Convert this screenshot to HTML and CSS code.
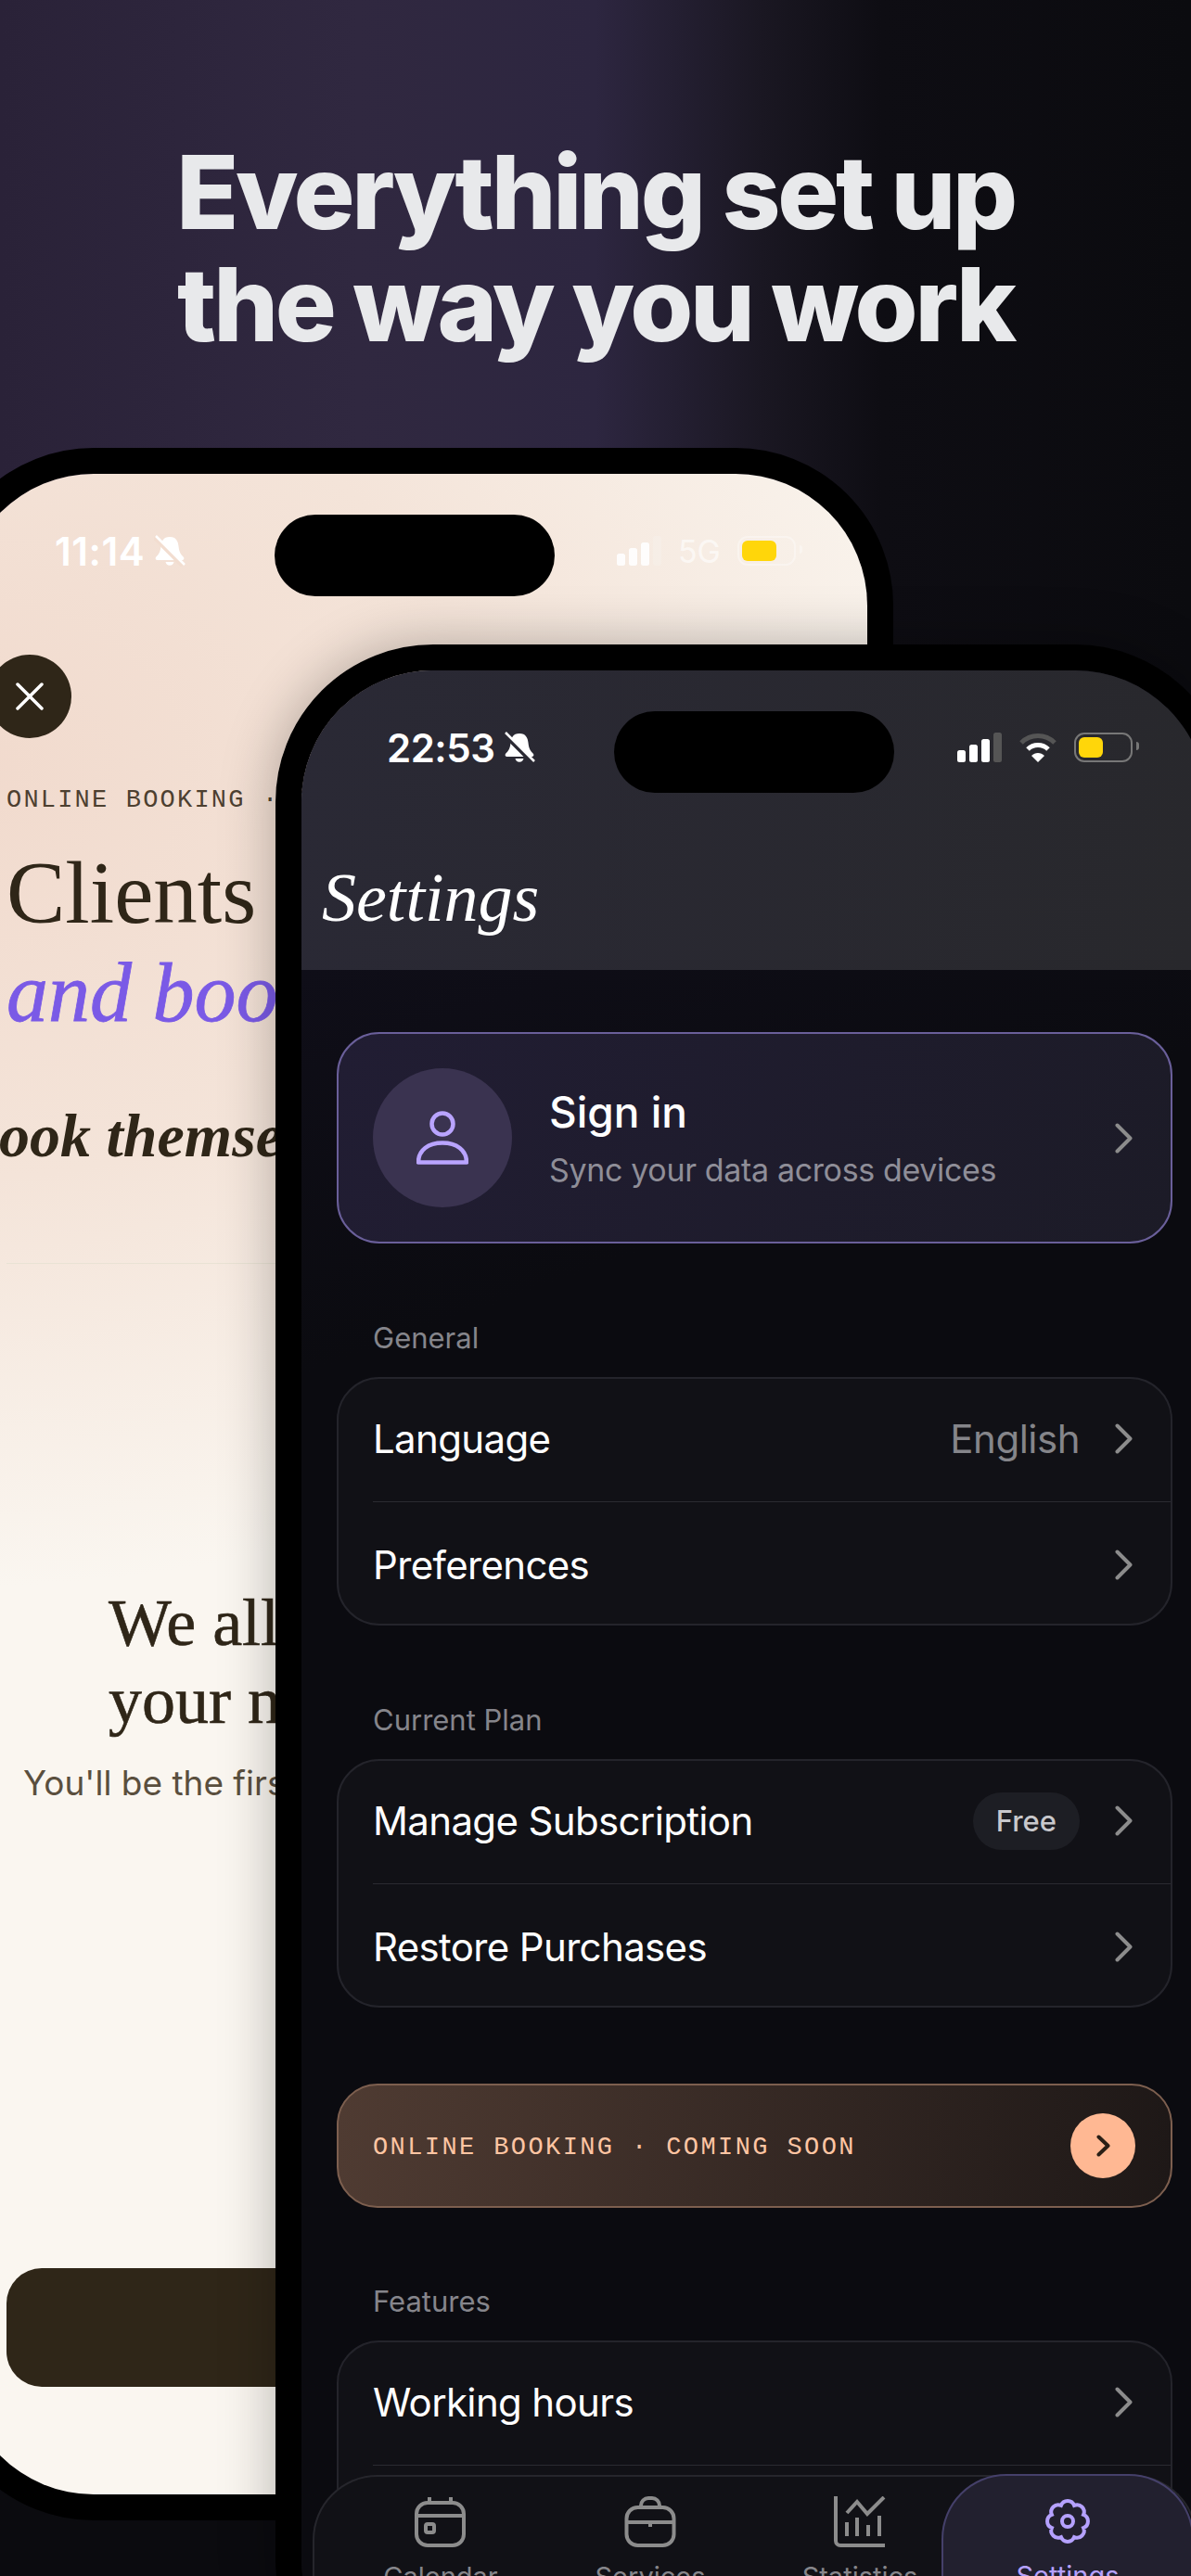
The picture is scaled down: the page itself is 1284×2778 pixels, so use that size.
FILE: index.html
```html
<!DOCTYPE html>
<html lang="en">
<head>
    <meta charset="UTF-8">
    <meta name="viewport" content="width=device-width, initial-scale=1.0">
    <title>Everything set up the way you work</title>
    <link rel="stylesheet" href="styles.css">
</head>
<body>
    <h1 class="headline">Everything set up<br>the way you work</h1>

    <!-- Booking phone, behind -->
    <div class="phone phone-back">
        <div class="screen screen-light">
            <div class="notch"></div>
            <div class="status status-light">
                <div class="status-time">
                    <span>11:14</span>
                    <svg class="bell" viewBox="0 0 34 34"><path class="bell-body" d="M17 2C10 2 8 7 7.500 12C7 18 5 21 2 24C1 25.500 2 27 3.500 27H30.500C32 27 33 25.500 32 24C29 21 27 18 26.500 12C26 7 24 2 17 2ZM12.500 29a4.600 4.600 0 0 0 9 0Z"/><path class="bell-gap" d="M0 2L31 33"/><path class="bell-slash" d="M2 1L33 32"/></svg>
                </div>
                <div class="status-icons">
                    <svg class="signal" viewBox="0 0 48 32"><rect x="0" y="19" width="9" height="13" rx="2.500"/><rect x="13" y="13" width="9" height="19" rx="2.500"/><rect x="26" y="7" width="9" height="25" rx="2.500"/><rect class="dim" x="39" y="0" width="9" height="32" rx="2.500"/></svg>
                    <span class="net">5G</span>
                    <div class="battery"><div class="battery-fill"></div></div>
                </div>
            </div>

            <div class="close-btn">
                <svg viewBox="0 0 32 32"><path d="M3 3L29 29M29 3L3 29"/></svg>
            </div>
            <p class="overline">ONLINE BOOKING · COMING SOON</p>
            <h2 class="hero-title">Clients choose</h2>
            <h2 class="hero-accent">and book online</h2>
            <p class="hero-sub">book themselves</p>
            <hr class="hero-rule">
            <h3 class="notice-title">We all keep<br>your number</h3>
            <p class="notice-text">You'll be the first to know</p>
            <div class="notify-btn"></div>
        </div>
    </div>

    <!-- Settings phone, in front -->
    <div class="phone phone-front">
        <div class="screen screen-dark">
            <div class="notch"></div>
            <header class="settings-head">
                <div class="status">
                    <div class="status-time">
                        <span>22:53</span>
                        <svg class="bell" viewBox="0 0 34 34"><path class="bell-body" d="M17 2C10 2 8 7 7.500 12C7 18 5 21 2 24C1 25.500 2 27 3.500 27H30.500C32 27 33 25.500 32 24C29 21 27 18 26.500 12C26 7 24 2 17 2ZM12.500 29a4.600 4.600 0 0 0 9 0Z"/><path class="bell-gap" d="M0 2L31 33"/><path class="bell-slash" d="M2 1L33 32"/></svg>
                    </div>
                    <div class="status-icons">
                        <svg class="signal" viewBox="0 0 48 32"><rect x="0" y="19" width="9" height="13" rx="2.500"/><rect x="13" y="13" width="9" height="19" rx="2.500"/><rect x="26" y="7" width="9" height="25" rx="2.500"/><rect class="dim" x="39" y="0" width="9" height="32" rx="2.500"/></svg>
                        <svg class="wifi" viewBox="0 0 42 32"><path class="wifi-outer" d="M3 11C13 1 29 1 39 11"/><path class="wifi-mid" d="M10 18C16 12 26 12 32 18"/><path class="wifi-dot" d="M14 25C18 21 24 21 28 25L21 32Z"/></svg>
                        <div class="battery"><div class="battery-fill"></div></div>
                    </div>
                </div>
                <h2 class="settings-title">Settings</h2>
            </header>

            <main class="settings-body">
                <div class="signin-card">
                    <div class="avatar">
                        <svg viewBox="0 0 56 58"><circle cx="28" cy="14" r="11.500"/><path d="M2 55.500C2 42 13 34.500 28 34.500S54 42 54 55.500Z"/></svg>
                    </div>
                    <div class="signin-text">
                        <div class="signin-title">Sign in</div>
                        <div class="signin-sub">Sync your data across devices</div>
                    </div>
                    <svg class="chevron" viewBox="0 0 19 33"><path d="M2.500 2.500L16.500 16.500L2.500 30.500"/></svg>
                </div>

                <div class="group-label">General</div>
                <div class="group">
                    <div class="row">
                        <span class="row-name">Language</span>
                        <span class="row-value">English</span>
                        <svg class="chevron" viewBox="0 0 19 33"><path d="M2.500 2.500L16.500 16.500L2.500 30.500"/></svg>
                    </div>
                    <div class="row">
                        <span class="row-name">Preferences</span>
                        <svg class="chevron" viewBox="0 0 19 33"><path d="M2.500 2.500L16.500 16.500L2.500 30.500"/></svg>
                    </div>
                </div>

                <div class="group-label">Current Plan</div>
                <div class="group">
                    <div class="row">
                        <span class="row-name">Manage Subscription</span>
                        <span class="badge">Free</span>
                        <svg class="chevron" viewBox="0 0 19 33"><path d="M2.500 2.500L16.500 16.500L2.500 30.500"/></svg>
                    </div>
                    <div class="row">
                        <span class="row-name">Restore Purchases</span>
                        <svg class="chevron" viewBox="0 0 19 33"><path d="M2.500 2.500L16.500 16.500L2.500 30.500"/></svg>
                    </div>
                </div>

                <div class="promo">
                    <span class="promo-text">ONLINE BOOKING · COMING SOON</span>
                    <div class="promo-btn">
                        <svg viewBox="0 0 15 24"><path d="M2.500 2.500L12.500 12L2.500 21.500"/></svg>
                    </div>
                </div>

                <div class="group-label">Features</div>
                <div class="group">
                    <div class="row">
                        <span class="row-name">Working hours</span>
                        <svg class="chevron" viewBox="0 0 19 33"><path d="M2.500 2.500L16.500 16.500L2.500 30.500"/></svg>
                    </div>
                    <div class="row">
                        <span class="row-name">Notifications</span>
                        <svg class="chevron" viewBox="0 0 19 33"><path d="M2.500 2.500L16.500 16.500L2.500 30.500"/></svg>
                    </div>
                </div>
            </main>

            <nav class="tabbar">
                <div class="tab">
                    <svg viewBox="0 0 56 56"><rect x="2" y="7" width="51" height="46" rx="12"/><path d="M2 21H53M16 1V7M39 1V7"/><rect x="12" y="30" width="9" height="9" rx="2"/></svg>
                    <span>Calendar</span>
                </div>
                <div class="tab">
                    <svg viewBox="0 0 56 56"><rect x="2.500" y="12" width="51" height="41" rx="12"/><path d="M18 12V10a8 8 0 0 1 8-8h4a8 8 0 0 1 8 8v2M2.500 28H53.500M28 28V33"/></svg>
                    <span>Services</span>
                </div>
                <div class="tab">
                    <svg viewBox="0 0 56 56"><path d="M2 0V48a5 5 0 0 0 5 5H55M14 28V43M25 23V43M37 31V43M49 21V43M14 18L25 6L36 19L54 1"/></svg>
                    <span>Statistics</span>
                </div>
                <div class="tab tab-active">
                    <svg viewBox="0 0 50 50"><path d="M42.090 17.920A7.600 7.600 0 0 1 42.090 32.080A7.600 7.600 0 0 1 32.080 42.090A7.600 7.600 0 0 1 17.920 42.090A7.600 7.600 0 0 1 7.910 32.080A7.600 7.600 0 0 1 7.910 17.920A7.600 7.600 0 0 1 17.920 7.910A7.600 7.600 0 0 1 32.080 7.910A7.600 7.600 0 0 1 42.090 17.920Z"/><circle cx="25" cy="25" r="6"/></svg>
                    <span>Settings</span>
                </div>
            </nav>
        </div>
    </div>
</body>
</html>
```

FILE: styles.css
```css
html, body {
    margin: 0;
    padding: 0;
}

body {
    position: relative;
    width: 1284px;
    height: 2778px;
    overflow: hidden;
    font-family: Inter, "Liberation Sans", sans-serif;
    background-color: #0b0b0f;
    background-image: linear-gradient(90deg, #2a2238 0, #302840 30%, #2d2640 50%, #1a1722 64%, #0e0d13 74%, #0b0b0f 100%);
    background-size: 100% 800px;
    background-repeat: no-repeat;
}

.headline {
    margin: 0;
    padding-top: 147px;
    font-size: 110px;
    line-height: 121px;
    font-weight: 800;
    letter-spacing: -3.3px;
    text-align: center;
    color: #e8e9eb;
}

/* phones */
.phone {
    position: absolute;
    box-sizing: border-box;
    width: 1032px;
    height: 2235px;
    border: 28px solid #000;
    border-radius: 170px;
}

.phone-back {
    left: -69px;
    top: 483px;
}

.phone-front {
    left: 297px;
    top: 695px;
    box-shadow: 0 0 60px rgba(0, 0, 0, 0.28);
}

.screen {
    position: relative;
    height: 100%;
    border-radius: 142px;
    overflow: hidden;
}

.screen-light {
    background: #faf6f0 radial-gradient(ellipse 1150px 880px at 0 320px, #f1dacd 0, #f4e4d9 50%, #faf6f0 100%) no-repeat;
}

.screen-dark {
    background: linear-gradient(160deg, #12101e 0, #0b0b10 30%);
}

.notch {
    position: absolute;
    left: 337px;
    top: 44px;
    width: 302px;
    height: 88px;
    border-radius: 44px;
    background: #000;
}

/* status bar */
.status {
    display: flex;
    justify-content: space-between;
    align-items: center;
    height: 34px;
    padding: 66px 80px 0 92px;
    color: #fff;
    --gap: #2a2933;
}

.status-light {
    padding: 66px 77px 0 100px;
    --gap: #f2ddd0;
}

.status-time {
    display: flex;
    align-items: center;
    gap: 10px;
    font-size: 42px;
    font-weight: 600;
    letter-spacing: -0.5px;
}

.status-light .status-time {
    letter-spacing: 0.5px;
}

.bell {
    width: 34px;
    height: 34px;
}

.bell-body {
    fill: #fff;
}

.bell-gap {
    stroke: var(--gap);
    stroke-width: 5;
}

.bell-slash {
    stroke: #fff;
    stroke-width: 2.500;
}

.status-icons {
    display: flex;
    align-items: center;
    gap: 18px;
}

.signal {
    width: 48px;
    height: 32px;
    fill: #fff;
}

.signal .dim {
    fill: #555;
}

.status-light .signal {
    width: 48px;
    opacity: 0.9;
}

.status-light .signal .dim {
    fill: rgba(255, 255, 255, 0.2);
}

.wifi {
    width: 42px;
    height: 32px;
    fill: none;
}

.wifi-outer {
    stroke: #555;
    stroke-width: 5;
}

.wifi-mid {
    stroke: #fff;
    stroke-width: 5;
}

.wifi-dot {
    fill: #fff;
}

.net {
    font-size: 34px;
    color: rgba(255, 255, 255, 0.6);
}

.battery {
    position: relative;
    box-sizing: border-box;
    width: 63px;
    height: 32px;
    padding: 3px;
    border: 2.500px solid #777;
    border-radius: 11px;
}

.battery::after {
    content: "";
    position: absolute;
    right: -9px;
    top: 8px;
    width: 3px;
    height: 9px;
    border-radius: 0 3px 3px 0;
    background: #777;
}

.status-light .battery,
.status-light .battery::after {
    border-color: rgba(255, 255, 255, 0.35);
}

.status-light .battery::after {
    background: rgba(255, 255, 255, 0.35);
}

.battery-fill {
    width: 26px;
    height: 100%;
    border-radius: 6px;
    background: #ffd60a;
}

.status-light .battery-fill {
    width: 37px;
}

/* booking screen */
.close-btn {
    display: flex;
    align-items: center;
    justify-content: center;
    width: 90px;
    height: 90px;
    margin: 95px 0 0 28px;
    border-radius: 50%;
    background: #2f2618;
}

.close-btn svg {
    width: 32px;
    height: 32px;
    fill: none;
    stroke: #fff;
    stroke-width: 3.500;
    stroke-linecap: round;
}

.overline {
    margin: 52px 0 0 48px;
    font-family: "Liberation Mono", monospace;
    font-size: 27px;
    line-height: 30px;
    letter-spacing: 2.200px;
    white-space: nowrap;
    color: #4d4030;
}

.hero-title,
.hero-accent,
.hero-sub,
.notice-title {
    font-family: "Liberation Serif", serif;
    white-space: nowrap;
}

.hero-title {
    margin: 32px 0 0 48px;
    font-size: 95px;
    line-height: 107px;
    font-weight: 400;
    color: #2f2618;
}

.hero-accent {
    margin: 0 0 0 48px;
    font-size: 90px;
    line-height: 107px;
    font-weight: 400;
    font-style: italic;
    color: #7a5ae6;
    -webkit-text-stroke: 0.8px #7a5ae6;
}

.hero-sub {
    margin: 61px 0 0 7px;
    font-size: 66px;
    line-height: 80px;
    font-weight: 700;
    font-style: italic;
    color: #2f2618;
}

.hero-rule {
    height: 1px;
    margin: 97px 0 0 48px;
    border: 0;
    background: #e9e2d4;
}

.notice-title {
    margin: 345px 0 0 158px;
    font-size: 72px;
    line-height: 84px;
    font-weight: 400;
    color: #2f2618;
    -webkit-text-stroke: 0.6px #2f2618;
}

.notice-text {
    margin: 24px 0 0 66px;
    font-size: 37px;
    line-height: 46px;
    white-space: nowrap;
    color: #5a4f3e;
}

.notify-btn {
    width: 880px;
    height: 128px;
    margin: 500px 0 0 48px;
    border-radius: 38px;
    background: #2f2618;
}

/* settings screen */
.settings-head {
    height: 323px;
    background: linear-gradient(100deg, #2a2935 0, #28282c 100%);
}

.settings-title {
    margin: 105px 0 0 22px;
    font-family: "Liberation Serif", serif;
    font-size: 74px;
    line-height: 80px;
    font-weight: 400;
    font-style: italic;
    color: #fff;
}

.settings-body {
    padding: 67px 37px 0 38px;
}

.signin-card {
    display: flex;
    align-items: center;
    box-sizing: border-box;
    height: 228px;
    margin-bottom: 1px;
    padding: 0 41px 0 37px;
    border: 2px solid #6a5f9a;
    border-radius: 46px;
    background: linear-gradient(110deg, #211d33 0, #1c1b27 100%);
}

.avatar {
    display: flex;
    align-items: center;
    justify-content: center;
    flex: none;
    width: 150px;
    height: 150px;
    margin-right: 40px;
    border-radius: 50%;
    background: #3a3350;
}

.avatar svg {
    width: 56px;
    height: 58px;
    fill: none;
    stroke: #b9a4ff;
    stroke-width: 4.500;
    stroke-linejoin: round;
}

.signin-text {
    flex: 1;
}

.signin-title {
    font-size: 46px;
    line-height: 56px;
    font-weight: 500;
    color: #fff;
}

.signin-sub {
    margin-top: 14px;
    font-size: 34px;
    line-height: 42px;
    letter-spacing: -0.35px;
    color: #8f8e98;
}

.chevron {
    flex: none;
    width: 19px;
    height: 33px;
    fill: none;
    stroke: #8c8c8c;
    stroke-width: 4;
    stroke-linecap: round;
    stroke-linejoin: round;
}

.group-label {
    margin: 82px 0 22px 39px;
    font-size: 31px;
    line-height: 40px;
    color: #85858b;
}

.group {
    border: 2px solid #24242b;
    border-radius: 46px;
    background: #111116;
}

.row {
    display: flex;
    align-items: center;
    gap: 38px;
    box-sizing: border-box;
    height: 132px;
    margin-left: 37px;
    padding: 0 41px 3px 0;
}

.row + .row {
    padding: 3px 41px 0 0;
    border-top: 1px solid #2b2b31;
}

.row-name {
    flex: 1;
    font-size: 42px;
    letter-spacing: -0.65px;
    color: #fff;
}

.row-value {
    font-size: 42px;
    letter-spacing: -0.5px;
    color: #85858a;
}

.badge {
    height: 62px;
    padding: 0 25px;
    border-radius: 31px;
    font-size: 31px;
    line-height: 62px;
    font-weight: 500;
    color: #c8c8cc;
    background: #1d1e24;
}

.promo {
    display: flex;
    align-items: center;
    justify-content: space-between;
    box-sizing: border-box;
    height: 134px;
    margin: 82px 0 -1px;
    padding: 0 38px 0 37px;
    border: 2px solid #7d5f4f;
    border-radius: 44px;
    background: linear-gradient(90deg, #4f3b32 0, #1e1817 100%);
}

.promo-text {
    margin-top: 3px;
    font-family: "Liberation Mono", monospace;
    font-size: 27px;
    letter-spacing: 2.400px;
    color: #ffc5a3;
}

.promo-btn {
    display: flex;
    align-items: center;
    justify-content: center;
    width: 70px;
    height: 70px;
    border-radius: 50%;
    background: #ffb893;
}

.promo-btn svg {
    width: 15px;
    height: 24px;
    fill: none;
    stroke: #2a1f16;
    stroke-width: 4;
    stroke-linecap: round;
    stroke-linejoin: round;
}

/* tab bar sits over the scrolling list */
.tabbar {
    position: absolute;
    left: 12px;
    right: 10px;
    top: 1946px;
    bottom: 0;
    display: flex;
    box-sizing: border-box;
    padding-left: 23px;
    border: 2px solid #26262c;
    border-bottom: 0;
    border-radius: 70px 70px 0 0;
    background: #111116;
}

.tab {
    display: flex;
    flex-direction: column;
    align-items: center;
    flex: none;
    box-sizing: border-box;
    width: 226px;
    padding-top: 21px;
    font-size: 29px;
    color: #85858a;
}

.tab svg {
    width: 56px;
    height: 56px;
    margin-bottom: 13px;
    fill: none;
    stroke: #8c8c8c;
    stroke-width: 4;
}

.tab-active {
    width: 272px;
    margin: -3px -25px 0;
    padding-top: 24px;
    border: 2px solid #45406a;
    border-bottom: 0;
    border-radius: 70px 70px 0 0;
    color: #b5a1ff;
    background: #22202f;
}

.tab-active svg {
    width: 50px;
    height: 50px;
    margin-bottom: 16px;
    stroke: #b5a1ff;
}
```
